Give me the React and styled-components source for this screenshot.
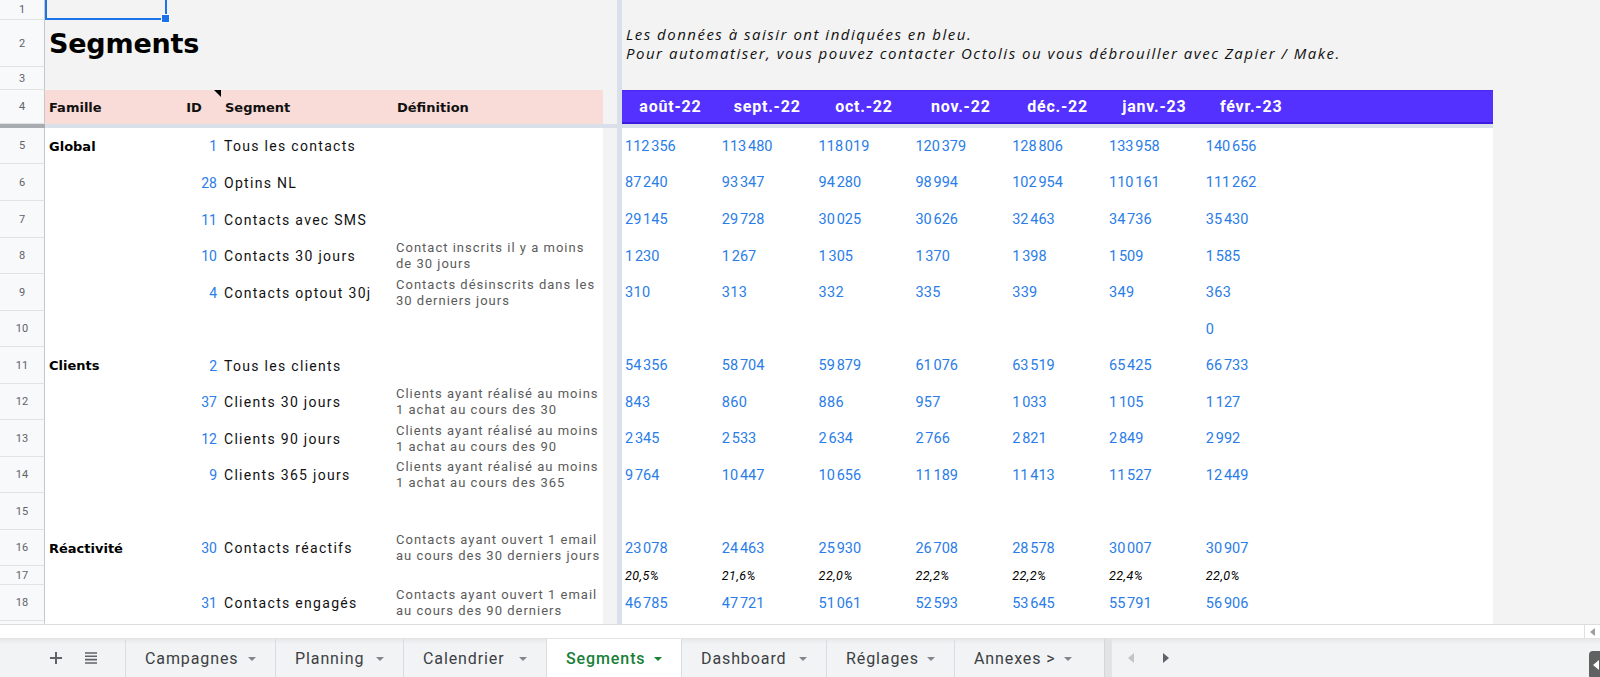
import React from 'react';
import styled, { createGlobalStyle } from 'styled-components';

const COLS = '45px 122px 54px 172px 210px 14px 5px repeat(9, 96.8px) 1fr';
const MONTHS = ['août-22', 'sept.-22', 'oct.-22', 'nov.-22', 'déc.-22', 'janv.-23', 'févr.-23', '', ''];
const nb = (s) => s.replace(' ', '\u202f');

const ROWS = [
  { num: 5, h: 36, fam: 'Global', id: 1, name: 'Tous les contacts', vals: ['112 356', '113 480', '118 019', '120 379', '128 806', '133 958', '140 656'] },
  { num: 6, h: 37, id: 28, name: 'Optins NL', vals: ['87 240', '93 347', '94 280', '98 994', '102 954', '110 161', '111 262'] },
  { num: 7, h: 37, id: 11, name: 'Contacts avec SMS', vals: ['29 145', '29 728', '30 025', '30 626', '32 463', '34 736', '35 430'] },
  { num: 8, h: 36, id: 10, name: 'Contacts 30 jours', def: ['Contact inscrits il y a moins', 'de 30 jours'], vals: ['1 230', '1 267', '1 305', '1 370', '1 398', '1 509', '1 585'] },
  { num: 9, h: 37, id: 4, name: 'Contacts optout 30j', def: ['Contacts désinscrits dans les', '30 derniers jours'], vals: ['310', '313', '332', '335', '339', '349', '363'] },
  { num: 10, h: 36, vals: ['', '', '', '', '', '', '0'] },
  { num: 11, h: 37, fam: 'Clients', id: 2, name: 'Tous les clients', vals: ['54 356', '58 704', '59 879', '61 076', '63 519', '65 425', '66 733'] },
  { num: 12, h: 36, id: 37, name: 'Clients 30 jours', def: ['Clients ayant réalisé au moins', '1 achat au cours des 30'], vals: ['843', '860', '886', '957', '1 033', '1 105', '1 127'] },
  { num: 13, h: 37, id: 12, name: 'Clients 90 jours', def: ['Clients ayant réalisé au moins', '1 achat au cours des 90'], vals: ['2 345', '2 533', '2 634', '2 766', '2 821', '2 849', '2 992'] },
  { num: 14, h: 36, id: 9, name: 'Clients 365 jours', def: ['Clients ayant réalisé au moins', '1 achat au cours des 365'], vals: ['9 764', '10 447', '10 656', '11 189', '11 413', '11 527', '12 449'] },
  { num: 15, h: 37 },
  { num: 16, h: 36, fam: 'Réactivité', id: 30, name: 'Contacts réactifs', def: ['Contacts ayant ouvert 1 email', 'au cours des 30 derniers jours'], vals: ['23 078', '24 463', '25 930', '26 708', '28 578', '30 007', '30 907'] },
  { num: 17, h: 19, pct: ['20,5%', '21,6%', '22,0%', '22,2%', '22,2%', '22,4%', '22,0%'] },
  { num: 18, h: 36, id: 31, name: 'Contacts engagés', def: ['Contacts ayant ouvert 1 email', 'au cours des 90 derniers'], vals: ['46 785', '47 721', '51 061', '52 593', '53 645', '55 791', '56 906'] },
  { num: '', h: 3 },
];

const TABS = [
  { label: 'Campagnes', w: 150 },
  { label: 'Planning', w: 128 },
  { label: 'Calendrier', w: 143 },
  { label: 'Segments', w: 135, active: true },
  { label: 'Dashboard', w: 145 },
  { label: 'Réglages', w: 128 },
  { label: 'Annexes >', w: 137 },
];

export default function App() {
  return (
    <>
      <GlobalStyle />
      <Page>
        <Sheet>
          <Row $h={20}>
            <RowHead>1</RowHead>
            <Selected />
            <Cell $bg="#f3f3f3" />
            <Cell $bg="#f3f3f3" />
            <Cell $bg="#f3f3f3" />
            <Cell $bg="#f3f3f3" />
            <Freeze />
            <Cell $bg="#f3f3f3" $span={10} />
          </Row>
          <Row $h={47}>
            <RowHead>2</RowHead>
            <Title $span={5}>Segments</Title>
            <Freeze />
            <Note $span={10}>
              <span>Les données à saisir ont indiquées en bleu.</span>
              <span>Pour automatiser, vous pouvez contacter Octolis ou vous débrouiller avec Zapier / Make.</span>
            </Note>
          </Row>
          <Row $h={23}>
            <RowHead>3</RowHead>
            <Cell $bg="#f3f3f3" $span={5} />
            <Freeze />
            <Cell $bg="#f3f3f3" $span={10} />
          </Row>
          <Row $h={34}>
            <RowHead>4</RowHead>
            <HeadCell>Famille</HeadCell>
            <HeadCell $center $noted>ID</HeadCell>
            <HeadCell>Segment</HeadCell>
            <HeadCell>Définition</HeadCell>
            <Cell $bg="#f3f3f3" />
            <Freeze />
            {MONTHS.map((m, i) => (
              <MonthCell key={i}>{m}</MonthCell>
            ))}
            <Cell $bg="#f3f3f3" />
          </Row>
          <FreezeRow>
            <FreezeHead />
            <Cell $bg="#dae0e9" $span={15} />
            <Cell $bg="#f3f3f3" />
          </FreezeRow>
          {ROWS.map((r, ri) => (
            <Row key={ri} $h={r.h}>
              <RowHead $last={r.num === ''}>{r.num}</RowHead>
              <Family>{r.fam}</Family>
              <IdCell>{r.id}</IdCell>
              <Name>{r.name}</Name>
              <Def>
                {r.def && r.def.map((l, i) => <span key={i}>{l}</span>)}
              </Def>
              <Cell $bg="#f3f3f3" />
              <Freeze />
              {Array.from({ length: 9 }).map((_, i) =>
                r.pct ? (
                  <Pct key={i}>{r.pct[i]}</Pct>
                ) : (
                  <Value key={i}>{r.vals && r.vals[i] ? nb(r.vals[i]) : ''}</Value>
                )
              )}
              <Cell $bg="#f3f3f3" />
            </Row>
          ))}
        </Sheet>
        <ScrollStrip>
          <ScrollBtn>
            <Tri $dir="left" $size={4} $color="#9e9e9e" />
          </ScrollBtn>
        </ScrollStrip>
        <TabBar>
          <Controls>
            <svg width="16" height="16" viewBox="0 0 16 16">
              <path d="M8 2v12M2 8h12" stroke="#5f6368" strokeWidth="2" />
            </svg>
            <svg width="16" height="16" viewBox="0 0 16 16">
              <path d="M2 3h12M2 6.3h12M2 9.6h12M2 13h12" stroke="#5f6368" strokeWidth="1.6" />
            </svg>
          </Controls>
          {TABS.map((t) => (
            <Tab key={t.label} $w={t.w} $active={t.active}>
              <span>{t.label}</span>
              <Caret $active={t.active} />
            </Tab>
          ))}
          <NavDivider />
          <NavArrows>
            <Tri $dir="left" $size={5} $color="#c4c4c4" />
            <Tri $dir="right" $size={5} $color="#5f6368" />
          </NavArrows>
          <Explore>
            <Tri $dir="left" $size={5} $color="#fff" />
          </Explore>
        </TabBar>
      </Page>
    </>
  );
}

const GlobalStyle = createGlobalStyle`
  html, body { margin: 0; padding: 0; background: #fff; overflow: hidden; }
  body { font-family: Roboto, "Liberation Sans", sans-serif; color: #111; }
  * { box-sizing: border-box; }
`;

const Page = styled.div`
  width: 1600px;
  height: 677px;
  display: flex;
  flex-direction: column;
  overflow: hidden;
`;

const Sheet = styled.div`
  display: flex;
  flex-direction: column;
`;

const Row = styled.div`
  display: grid;
  grid-template-columns: ${COLS};
  height: ${(p) => p.$h}px;
`;

const FreezeRow = styled(Row).attrs({ $h: 4 })``;

const Cell = styled.div`
  grid-column: span ${(p) => p.$span || 1};
  background: ${(p) => p.$bg || '#fff'};
  display: flex;
  align-items: center;
  min-width: 0;
  overflow: hidden;
  white-space: nowrap;
`;

const RowHead = styled.div`
  background: #f8f9fa;
  border-right: 1px solid #c4c7c5;
  border-bottom: 1px solid ${(p) => (p.$last ? 'transparent' : '#e1e3e1')};
  color: #5f6368;
  font-size: 11px;
  display: flex;
  align-items: center;
  justify-content: center;
`;

const FreezeHead = styled.div`
  background: #a9adb1;
`;

const Freeze = styled.div`
  background: #dae0e9;
`;

const Selected = styled.div`
  position: relative;
  background: #f3f3f3;
  border: 2px solid #1a73e8;
  border-top: none;
  &::after {
    content: '';
    position: absolute;
    right: -5px;
    bottom: -5px;
    width: 7px;
    height: 7px;
    background: #1a73e8;
    border: 1px solid #fff;
    z-index: 2;
  }
`;

const Title = styled(Cell)`
  background: #f3f3f3;
  padding-left: 4px;
  font-family: "DejaVu Sans", sans-serif;
  font-weight: 700;
  font-size: 27px;
  letter-spacing: -0.2px;
  color: #000;
  overflow: visible;
`;

const Note = styled(Cell)`
  background: #f3f3f3;
  flex-direction: column;
  align-items: flex-start;
  justify-content: center;
  padding-left: 4px;
  font-family: "Open Sans", sans-serif;
  font-style: italic;
  font-size: 15px;
  line-height: 19px;
  letter-spacing: 1.5px;
  color: #111;
`;

const HeadCell = styled(Cell)`
  position: relative;
  background: #f9dbd8;
  padding: 0 4px;
  justify-content: ${(p) => (p.$center ? 'center' : 'flex-start')};
  font-family: "DejaVu Sans", sans-serif;
  font-weight: 700;
  font-size: 13px;
  color: #111;
  &::after {
    content: '';
    display: ${(p) => (p.$noted ? 'block' : 'none')};
    position: absolute;
    top: 0;
    right: 0;
    border-top: 7px solid #000;
    border-left: 7px solid transparent;
  }
`;

const MonthCell = styled(Cell)`
  background: #5431ff;
  border-top: 1px solid #4a28f2;
  border-bottom: 2px solid #3d1bdf;
  justify-content: center;
  font-weight: 700;
  font-size: 16px;
  letter-spacing: 0.8px;
  color: #fff;
`;

const Family = styled(Cell)`
  padding-left: 4px;
  font-family: "DejaVu Sans", sans-serif;
  font-weight: 700;
  font-size: 13px;
  color: #000;
`;

const IdCell = styled(Cell)`
  justify-content: flex-end;
  padding-right: 4px;
  font-size: 14px;
  color: #2a7de8;
`;

const Name = styled(Cell)`
  padding-left: 3px;
  font-size: 14px;
  letter-spacing: 1.3px;
  color: #111;
`;

const Def = styled(Cell)`
  padding-left: 3px;
  flex-direction: column;
  align-items: flex-start;
  justify-content: center;
  font-size: 13px;
  line-height: 16px;
  letter-spacing: 1px;
  color: #5b5b5b;
`;

const Value = styled(Cell)`
  padding-left: 3px;
  font-size: 14.5px;
  letter-spacing: 0.3px;
  color: #2a7de8;
`;

const Pct = styled(Cell)`
  padding-left: 3px;
  font-size: 12.5px;
  letter-spacing: 0.5px;
  font-style: italic;
  color: #000;
`;

const ScrollStrip = styled.div`
  height: 14px;
  border-top: 1px solid #dadce0;
  background: #fff;
  display: flex;
  justify-content: flex-end;
`;

const ScrollBtn = styled.div`
  width: 16px;
  border-left: 1px solid #e0e0e0;
  display: flex;
  align-items: center;
  justify-content: center;
`;

const Tri = styled.span`
  display: inline-block;
  width: 0;
  height: 0;
  border-top: ${(p) => p.$size}px solid transparent;
  border-bottom: ${(p) => p.$size}px solid transparent;
  ${(p) =>
    p.$dir === 'left'
      ? `border-right: ${p.$size + 1}px solid ${p.$color};`
      : `border-left: ${p.$size + 1}px solid ${p.$color};`}
`;

const TabBar = styled.div`
  flex: 1;
  display: flex;
  align-items: stretch;
  background: linear-gradient(to bottom, #e6e8ea 0, #f1f3f4 5px, #f1f3f4 100%);
  border-top: 1px solid #e3e3e3;
  overflow: hidden;
`;

const Controls = styled.div`
  width: 125px;
  display: flex;
  align-items: center;
  gap: 19px;
  padding-left: 48px;
`;

const Tab = styled.div`
  width: ${(p) => p.$w}px;
  display: flex;
  align-items: center;
  justify-content: space-between;
  padding: 1px 19px 0;
  border-left: 1px solid #dadce0;
  background: ${(p) => (p.$active ? '#fff' : 'transparent')};
  color: ${(p) => (p.$active ? '#188038' : '#3c4043')};
  font-size: 16px;
  font-weight: ${(p) => (p.$active ? 500 : 400)};
  letter-spacing: 0.9px;
  &:last-of-type {
    border-right: 1px solid #dadce0;
  }
`;

const Caret = styled.span`
  width: 0;
  height: 0;
  border-left: 4px solid transparent;
  border-right: 4px solid transparent;
  border-top: 4px solid ${(p) => (p.$active ? '#188038' : '#80868b')};
`;

const NavDivider = styled.div`
  width: 8px;
  margin-left: 13px;
  background: #e2e3e4;
  border-left: 1px solid #d5d6d7;
`;

const NavArrows = styled.div`
  display: flex;
  align-items: center;
  gap: 29px;
  padding-left: 16px;
`;

const Explore = styled.div`
  margin-left: auto;
  margin-top: 12px;
  margin-right: -13px;
  width: 24px;
  height: 28px;
  border-radius: 4px;
  background: #616161;
  display: flex;
  align-items: center;
  justify-content: flex-start;
  padding-left: 4px;
`;
